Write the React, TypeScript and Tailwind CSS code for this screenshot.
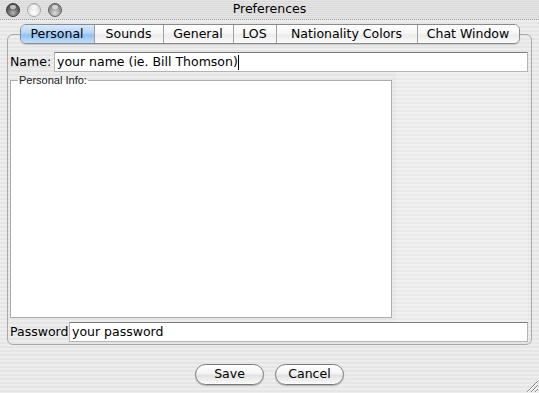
const tabs = [
    { label: 'Personal', width: 'w-[73px]', selected: true },
    { label: 'Sounds', width: 'w-[69px]' },
    { label: 'General', width: 'w-[70px]' },
    { label: 'LOS', width: 'w-[43px]' },
    { label: 'Nationality Colors', width: 'w-[141px]' },
    { label: 'Chat Window', width: 'w-[102px]' },
]

function Light({ tone }: { tone: 'dark' | 'light' | 'mid' }) {
    const fill =
        tone === 'dark'
            ? 'bg-[radial-gradient(circle_at_50%_75%,#b5b5b5_0%,#6d6d6d_45%,#3c3c3c_100%)] border-[#3a3a3a]'
            : tone === 'light'
              ? 'bg-[radial-gradient(circle_at_50%_75%,#ffffff_0%,#e6e6e6_50%,#c9c9c9_100%)] border-[#a8a8a8]'
              : 'bg-[radial-gradient(circle_at_50%_75%,#dcdcdc_0%,#9c9c9c_50%,#6e6e6e_100%)] border-[#5e5e5e]'
    return (
        <div className={`relative w-[14px] h-[14px] rounded-full border ${fill}`}>
            <div className="absolute left-[3px] top-[1px] w-[6px] h-[4px] rounded-full bg-white/60" />
        </div>
    )
}

function Field({ value, caret }: { value: string; caret?: boolean }) {
    return (
        <div className="flex-1 h-[20px] bg-white border border-[#b4b4b4] border-t-[#7c7c7c] flex items-center pl-[2px] text-[12.5px] text-black leading-none">
            <span>{value}</span>
            {caret && <span className="w-px h-[15px] bg-black" />}
        </div>
    )
}

function AquaButton({ label }: { label: string }) {
    return (
        <button className="w-[69px] h-[21px] rounded-full border border-[#7a7a7a] bg-[linear-gradient(#ffffff,#f3f3f3_45%,#e2e2e2_55%,#fbfbfb)] shadow-[0_1px_1px_rgba(0,0,0,0.25)] text-[12.5px] text-black leading-none">
            {label}
        </button>
    )
}

export default function App() {
    const stripes = 'bg-[repeating-linear-gradient(180deg,#ededed_0px,#ededed_2px,#e5e5e5_2px,#e5e5e5_4px)]'
    return (
        <div
            className={`relative w-[539px] h-[393px] flex flex-col overflow-hidden ${stripes}`}
            style={{ fontFamily: '"DejaVu Sans", Verdana, sans-serif' }}
        >
            {/* title bar */}
            <div className="h-[20px] grid grid-cols-[1fr_auto_1fr] items-center border-b border-dotted border-[#9a9a9a] bg-[repeating-linear-gradient(180deg,#e4e4e4_0px,#e4e4e4_1px,#d9d9d9_1px,#d9d9d9_2px)]">
                <div className="flex items-center gap-[7px] pl-[6px]">
                    <Light tone="dark" />
                    <Light tone="light" />
                    <Light tone="mid" />
                </div>
                <div className="text-[12.5px] text-black leading-none">Preferences</div>
                <div />
            </div>

            <div className="px-[7px] pt-[4px] flex flex-col">
                {/* tab strip */}
                <div className="relative z-10 flex justify-center">
                    <div className="flex h-[20px] rounded-[6px] border border-[#8a8a8a] overflow-hidden shadow-[0_1px_1px_rgba(0,0,0,0.15)]">
                        {tabs.map((t, i) => (
                            <div
                                key={t.label}
                                className={`${t.width} h-full flex items-center justify-center text-[12.5px] text-black leading-none ${
                                    i > 0 ? 'border-l border-[#a0a0a0]' : ''
                                } ${
                                    t.selected
                                        ? 'bg-[linear-gradient(#d9eafc,#b3d4f7_45%,#8fbff2_55%,#c2e0fc)]'
                                        : 'bg-[linear-gradient(#ffffff,#f7f7f7_45%,#ececec_55%,#fbfbfb)]'
                                }`}
                            >
                                {t.label}
                            </div>
                        ))}
                    </div>
                </div>

                {/* tab panel */}
                <div className="-mt-[10px] h-[311px] rounded-[6px] border border-[#a8a8a8] pt-[17px] pl-[2px] pr-[3px] flex flex-col">
                    <div className="flex items-center h-[20px]">
                        <span className="text-[12.5px] text-black leading-none w-[44px]">Name:</span>
                        <Field value="your name (ie. Bill Thomson)" caret />
                    </div>

                    <div className="flex h-[250px]">
                        <div className="w-[386px] pr-[4px] pt-[2px] pb-[4px] flex">
                            <fieldset className="flex-1 border border-[#acacac] bg-white px-[7px]">
                                <legend
                                    className="px-[1px] text-[11px] text-[#222] leading-[12px]"
                                    style={{ fontFamily: '"Liberation Sans", Arial, sans-serif' }}
                                >
                                    Personal Info:
                                </legend>
                            </fieldset>
                        </div>
                        <div className="flex-1 bg-[repeating-linear-gradient(180deg,#f0f0f0_0px,#f0f0f0_2px,#e9e9e9_2px,#e9e9e9_4px)]" />
                    </div>

                    <div className="flex items-center h-[20px]">
                        <span className="text-[12.5px] text-black leading-none w-[59px]">Password</span>
                        <Field value="your password" />
                    </div>
                </div>

                {/* buttons */}
                <div className="mt-[19px] flex justify-center gap-[11px]">
                    <AquaButton label="Save" />
                    <AquaButton label="Cancel" />
                </div>
            </div>

            {/* resize grip */}
            <svg className="absolute right-0 bottom-0" width="15" height="15" viewBox="0 0 15 15">
                <path d="M3 14 L14 3 M7 14 L14 7 M11 14 L14 11" stroke="#8a8a8a" strokeWidth="1" />
                <path d="M4 14 L14 4 M8 14 L14 8 M12 14 L14 12" stroke="#ffffff" strokeWidth="1" />
            </svg>
        </div>
    )
}
